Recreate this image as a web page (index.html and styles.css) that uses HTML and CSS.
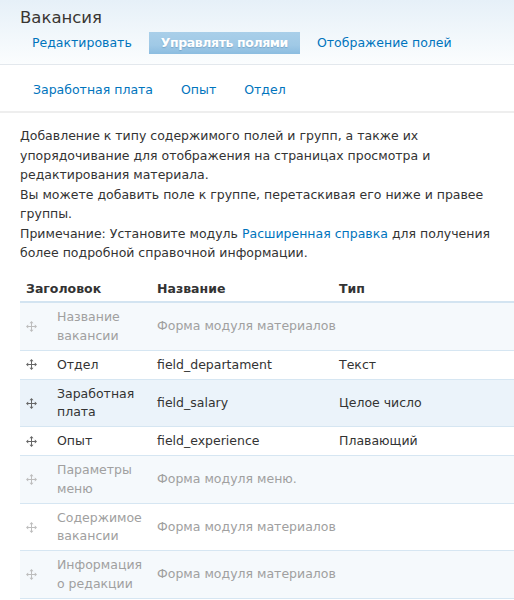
FILE: index.html
```html
<!DOCTYPE html>
<html lang="ru">
<head>
<meta charset="utf-8">
<title>Вакансия</title>
<link rel="stylesheet" href="styles.css">
</head>
<body>
<div class="header">
  <h1 class="title">Вакансия</h1>
  <ul class="tabs">
    <li><a href="#">Редактировать</a></li>
    <li class="active"><a href="#">Управлять полями</a></li>
    <li><a href="#">Отображение полей</a></li>
  </ul>
</div>
<ul class="subtabs">
  <li><a href="#">Заработная плата</a></li>
  <li><a href="#">Опыт</a></li>
  <li><a href="#">Отдел</a></li>
</ul>
<div class="content">
  <p class="help">Добавление к типу содержимого полей и групп, а также их упорядочивание для отображения на страницах просмотра и редактирования материала.<br>Вы можете добавить поле к группе, перетаскивая его ниже и правее группы.<br>Примечание: Установите модуль <a href="#">Расширенная справка</a> для получения более подробной справочной информации.</p>
  <table class="fields">
    <colgroup>
      <col class="c-handle"><col class="c-title"><col class="c-name"><col class="c-type">
    </colgroup>
    <thead>
      <tr><th colspan="2" class="th-first">Заголовок</th><th>Название</th><th>Тип</th></tr>
    </thead>
    <tbody>
      <tr class="odd muted"><td class="handle"><svg class="drag" viewBox="0 0 11 11"><path d="M5.5 0L3.5 2.2H7.5Z M5.5 11L3.5 8.8H7.5Z M0 5.5L2.2 3.5V7.5Z M11 5.5L8.8 3.5V7.5Z"/><path class="ln" d="M5.5 2V9 M2 5.5H9"/></svg></td><td class="t">Название вакансии</td><td>Форма модуля материалов</td><td></td></tr>
      <tr class="even"><td class="handle"><svg class="drag" viewBox="0 0 11 11"><path d="M5.5 0L3.5 2.2H7.5Z M5.5 11L3.5 8.8H7.5Z M0 5.5L2.2 3.5V7.5Z M11 5.5L8.8 3.5V7.5Z"/><path class="ln" d="M5.5 2V9 M2 5.5H9"/></svg></td><td class="t">Отдел</td><td>field_departament</td><td>Текст</td></tr>
      <tr class="odd hover"><td class="handle"><svg class="drag" viewBox="0 0 11 11"><path d="M5.5 0L3.5 2.2H7.5Z M5.5 11L3.5 8.8H7.5Z M0 5.5L2.2 3.5V7.5Z M11 5.5L8.8 3.5V7.5Z"/><path class="ln" d="M5.5 2V9 M2 5.5H9"/></svg></td><td class="t">Заработная плата</td><td>field_salary</td><td>Целое число</td></tr>
      <tr class="even"><td class="handle"><svg class="drag" viewBox="0 0 11 11"><path d="M5.5 0L3.5 2.2H7.5Z M5.5 11L3.5 8.8H7.5Z M0 5.5L2.2 3.5V7.5Z M11 5.5L8.8 3.5V7.5Z"/><path class="ln" d="M5.5 2V9 M2 5.5H9"/></svg></td><td class="t">Опыт</td><td>field_experience</td><td>Плавающий</td></tr>
      <tr class="odd muted"><td class="handle"><svg class="drag" viewBox="0 0 11 11"><path d="M5.5 0L3.5 2.2H7.5Z M5.5 11L3.5 8.8H7.5Z M0 5.5L2.2 3.5V7.5Z M11 5.5L8.8 3.5V7.5Z"/><path class="ln" d="M5.5 2V9 M2 5.5H9"/></svg></td><td class="t">Параметры меню</td><td>Форма модуля меню.</td><td></td></tr>
      <tr class="even muted"><td class="handle"><svg class="drag" viewBox="0 0 11 11"><path d="M5.5 0L3.5 2.2H7.5Z M5.5 11L3.5 8.8H7.5Z M0 5.5L2.2 3.5V7.5Z M11 5.5L8.8 3.5V7.5Z"/><path class="ln" d="M5.5 2V9 M2 5.5H9"/></svg></td><td class="t">Содержимое вакансии</td><td>Форма модуля материалов</td><td></td></tr>
      <tr class="odd muted"><td class="handle"><svg class="drag" viewBox="0 0 11 11"><path d="M5.5 0L3.5 2.2H7.5Z M5.5 11L3.5 8.8H7.5Z M0 5.5L2.2 3.5V7.5Z M11 5.5L8.8 3.5V7.5Z"/><path class="ln" d="M5.5 2V9 M2 5.5H9"/></svg></td><td class="t">Информация о редакции</td><td>Форма модуля материалов</td><td></td></tr>
    </tbody>
  </table>
</div>
</body>
</html>
```
FILE: styles.css
```css
html, body {
  margin: 0;
  padding: 0;
  background: #fff;
}
body {
  font-family: "DejaVu Sans", Verdana, sans-serif;
  font-size: 12.5px;
  color: #333;
  overflow: hidden;
}
a {
  color: #0074bd;
  text-decoration: none;
}
.header {
  background: linear-gradient(to bottom, #e6f0f8 0%, #fbfdfe 100%);
  border-bottom: 1px solid #e3e8ed;
  height: 65px;
  box-sizing: border-box;
  padding: 6px 0 0 20px;
}
.title {
  margin: 0;
  font-size: 16.5px;
  font-weight: normal;
  line-height: 23px;
  color: #3a3632;
}
.tabs {
  list-style: none;
  margin: 3px 0 0 0;
  padding: 0;
  display: flex;
  gap: 5px;
}
.tabs li a {
  display: block;
  padding: 0 12px;
  height: 22px;
  line-height: 22px;
}
.tabs li.active a {
  background: linear-gradient(to bottom, #a9cfe9 0%, #a0c9e6 60%, #8bbce0 100%);
  color: #fff;
  font-weight: bold;
  letter-spacing: -0.4px;
  text-shadow: 0 1px 1px rgba(60, 110, 150, 0.35);
}
.subtabs {
  list-style: none;
  margin: 0;
  padding: 14px 0 0 33px;
  height: 32px;
  display: flex;
  gap: 28px;
  border-bottom: 2px solid #eeeeee;
}
.subtabs li a {
  line-height: 22px;
}
.content {
  padding: 0 0 0 20px;
}
.help {
  margin: 13px 0 0 0;
  line-height: 19.5px;
  padding-right: 10px;
}
.fields {
  margin-top: 16px;
  width: 494px;
  border-collapse: collapse;
  table-layout: fixed;
}
.c-handle { width: 37px; }
.c-title { width: 100px; }
.c-name { width: 182px; }
.fields th {
  text-align: left;
  font-weight: bold;
  color: #333;
  line-height: 19.5px;
  padding: 0 0 3px 0;
  border-bottom: 2px solid #d3e4f1;
}
.fields th.th-first {
  padding-left: 6px;
}
.fields td {
  line-height: 18.5px;
  padding: 5px 0 4.5px 0;
  vertical-align: middle;
  border-bottom: 1px solid #d6e6f2;
}
.fields td.t {
  padding-right: 8px;
}
.fields tr.odd td {
  background: #f5f9fc;
}
.fields tr.even td {
  background: #fff;
}
.fields tr.hover td {
  background: #ebf3fa;
}
.fields tr.muted td {
  color: #a0a0a0;
}
.fields td.handle {
  padding-left: 6px;
}
.drag {
  display: block;
  width: 11px;
  height: 11px;
  fill: #666;
  stroke: none;
}
.drag .ln {
  stroke: #666;
  stroke-width: 1;
  fill: none;
}
.muted .drag {
  fill: #bdbdbd;
}
.muted .drag .ln {
  stroke: #bdbdbd;
}
```
